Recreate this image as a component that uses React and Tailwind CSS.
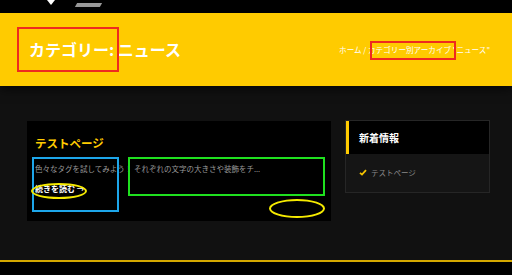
const font = { fontFamily: '"Noto Sans CJK JP", "Noto Sans", sans-serif' }

function Check() {
  return (
    <svg width="8" height="7" viewBox="0 0 8 7" className="shrink-0">
      <path d="M1 3.8 L3 5.6 L7 1.2" fill="none" stroke="#f5c400" strokeWidth="1.8" />
    </svg>
  )
}

export default function App() {
  return (
    <div className="relative w-[512px] h-[275px] overflow-hidden bg-[#111111]" style={font}>
      {/* 上部バー */}
      <div className="h-[13px] bg-black flex items-start pl-[47px] gap-[21px]">
        <div className="w-0 h-0 border-l-[4px] border-r-[4px] border-t-[5px] border-l-transparent border-r-transparent border-t-white" />
        <div className="mt-[3px] w-[25px] h-[4px] bg-[#9a9a9a] skew-x-[-30deg]" />
      </div>

      {/* ページヘッダー */}
      <header className="h-[73px] bg-[#ffcb00] flex items-center justify-between pl-[29px] pr-[22px] shadow-[0_3px_10px_rgba(0,0,0,0.7)] relative z-10">
        <h1 className="text-white font-bold text-[16px] leading-none -mt-[1px]">
          カテゴリー: ニュース
        </h1>
        <div className="text-white text-[7.6px] leading-none mt-[1px]">
          ホーム / カテゴリー別アーカイブ "ニュース"
        </div>
      </header>

      {/* メイン */}
      <main className="flex gap-[14px] pl-[27px] pr-[22px] pt-[34px] h-[174px]">
        <article className="w-[304px] h-[100px] mt-[1px] bg-black pl-[8px] pt-[17px]">
          <h2 className="text-[#ffcb00] font-bold text-[11.5px] leading-none">テストページ</h2>
          <p className="text-[#9a9a9a] text-[7.5px] leading-none mt-[15px]">
            色々なタグを試してみよう！ それぞれの文字の大きさや装飾をチ...
          </p>
          <a className="block text-white font-bold text-[8px] leading-none mt-[13px]">続きを読む →</a>
        </article>

        <aside className="w-[145px] h-[73px] bg-[#151515] border border-[#262626]">
          <div className="h-[33px] bg-black border-l-[3px] border-[#ffcb00] flex items-center pl-[10px]">
            <h3 className="text-white font-bold text-[10px] leading-none">新着情報</h3>
          </div>
          <ul className="pt-[15px] pl-[13px]">
            <li className="flex items-center gap-[4px] text-[#8a8a8a] text-[7.5px] leading-none">
              <Check />
              テストページ
            </li>
          </ul>
        </aside>
      </main>

      {/* フッター */}
      <footer className="h-[15px] bg-black border-t-[2px] border-[#d4a800]" />

      {/* 注釈 */}
      <div className="absolute z-20 left-[17px] top-[27px] w-[102px] h-[45px] border-2 border-[#ee2a1f]" />
      <div className="absolute z-20 left-[370px] top-[41px] w-[86px] h-[19px] border-2 border-[#ee2a1f]" />
      <div className="absolute z-20 left-[32px] top-[157px] w-[87px] h-[55px] border-2 border-[#1da6ea]" />
      <div className="absolute z-20 left-[128px] top-[157px] w-[197px] h-[39px] border-2 border-[#1fe01f]" />
      <div className="absolute z-20 left-[31px] top-[183px] w-[56px] h-[16px] rounded-[50%] border-2 border-[#f5ea00]" />
      <div className="absolute z-20 left-[269px] top-[199px] w-[56px] h-[19px] rounded-[50%] border-2 border-[#f5ea00]" />
    </div>
  )
}
